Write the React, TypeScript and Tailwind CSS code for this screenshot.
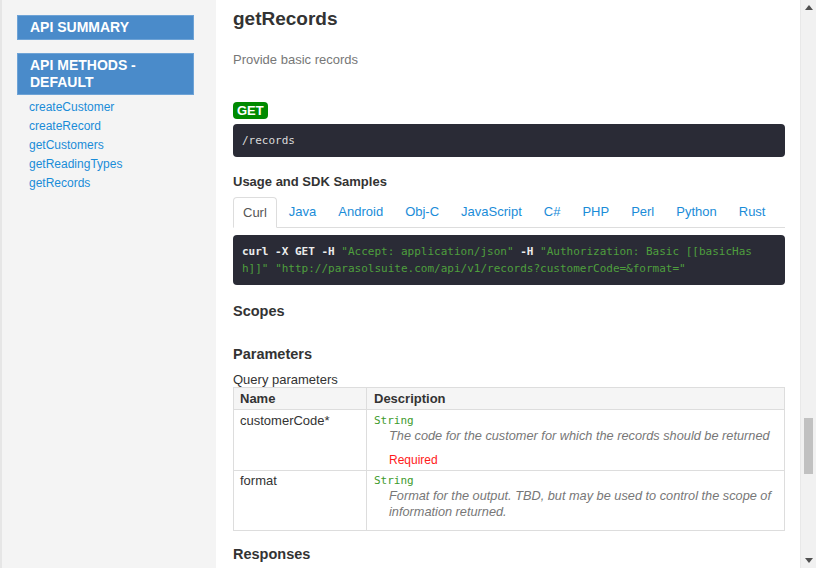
import React from 'react';

const methods = ['createCustomer', 'createRecord', 'getCustomers', 'getReadingTypes', 'getRecords'];
const tabs = ['Curl', 'Java', 'Android', 'Obj-C', 'JavaScript', 'C#', 'PHP', 'Perl', 'Python', 'Rust'];

const mono = { fontFamily: '"DejaVu Sans Mono", "Liberation Mono", monospace' };

function Sidebar() {
  return (
    <aside className="w-[216px] shrink-0 h-full bg-[#f4f4f4] border-l-2 border-[#e6e6e6] pl-[15px] pr-[22px] pt-[15px]">
      <div className="bg-[#4a8bca] border border-[#6ea3d6] text-white font-bold text-[14px] leading-[17px] px-[12px] py-[3px] uppercase">
        API Summary
      </div>
      <div className="mt-[13px] bg-[#4a8bca] border border-[#6ea3d6] text-white font-bold text-[14px] leading-[17px] px-[12px] py-[3px] uppercase">
        API Methods -<br />Default
      </div>
      <ul className="mt-[3px] pl-[12px]">
        {methods.map((m) => (
          <li key={m} className="text-[12px] leading-[19px] text-[#1a8cd8]">
            {m}
          </li>
        ))}
      </ul>
    </aside>
  );
}

function Scrollbar() {
  return (
    <div className="w-[16px] shrink-0 h-full bg-[#f1f1f1] border-l border-[#e8e8e8] flex flex-col items-center">
      <div className="h-[15px] flex items-center justify-center">
        <svg width="8" height="5" viewBox="0 0 8 5"><path d="M0 5 L4 0 L8 5 Z" fill="#505050" /></svg>
      </div>
      <div className="mt-[403px] w-[9px] h-[56px] bg-[#c1c1c1]" />
      <div className="flex-1" />
      <div className="h-[15px] flex items-center justify-center">
        <svg width="8" height="5" viewBox="0 0 8 5"><path d="M0 0 L8 0 L4 5 Z" fill="#505050" /></svg>
      </div>
    </div>
  );
}

function Main() {
  return (
    <main className="flex-1 h-full overflow-hidden bg-white pl-[17px] pr-[15px] text-[#333]">
      <h1 className="mt-[7px] text-[19px] leading-[23px] font-bold">getRecords</h1>
      <p className="mt-[22px] text-[13px] leading-[16px] text-[#777]">Provide basic records</p>

      <div className="mt-[34px] flex h-[17px]">
        <span className="bg-[#008a00] text-white font-bold text-[13px] leading-[17px] px-[4px] rounded-[4px]">
          GET
        </span>
      </div>
      <pre
        className="mt-[5px] bg-[#2a2b36] text-[#dcdcdc] text-[11px] leading-[17px] px-[9px] py-[8px] rounded-[4px]"
        style={mono}
      >
        /records
      </pre>

      <h3 className="mt-[17px] text-[13px] leading-[16px] font-bold">Usage and SDK Samples</h3>
      <div className="mt-[7px] flex border-b border-[#ddd] h-[31px]">
        {tabs.map((t, i) => (
          <div
            key={t}
            className={
              i === 0
                ? 'px-[9px] mr-[2px] text-[13px] leading-[30px] text-[#555] bg-white border border-[#ddd] border-b-white rounded-t-[4px] h-[31px]'
                : 'px-[10px] mr-[2px] text-[13px] leading-[30px] text-[#1a8cd8]'
            }
          >
            {t}
          </div>
        ))}
      </div>
      <pre
        className="mt-[7px] bg-[#2a2b36] text-[11px] leading-[17px] px-[9px] py-[8px] rounded-[4px] whitespace-pre"
        style={mono}
      >
        <span className="text-[#ececec] font-bold">curl -X GET -H </span>
        <span className="text-[#4e9f3d]">"Accept: application/json"</span>
        <span className="text-[#ececec] font-bold"> -H </span>
        <span className="text-[#4e9f3d]">"Authorization: Basic [[basicHas{'\n'}h]]"</span>
        <span className="text-[#ececec] font-bold"> </span>
        <span className="text-[#4e9f3d]">"http://parasolsuite.com/api/v1/records?customerCode=&amp;format="</span>
      </pre>

      <h2 className="mt-[17px] text-[14.5px] leading-[18px] font-bold">Scopes</h2>
      <h2 className="mt-[25px] text-[14.5px] leading-[18px] font-bold">Parameters</h2>
      <div className="mt-[9px] text-[13px] leading-[15px]">Query parameters</div>

      <table className="w-full border-collapse border border-[#ddd] text-[13px]">
        <thead>
          <tr className="bg-[#f5f5f5]">
            <th className="w-[133px] text-left font-bold border border-[#ddd] px-[6px] py-[3px] leading-[15px]">Name</th>
            <th className="text-left font-bold border border-[#ddd] px-[7px] py-[3px] leading-[15px]">Description</th>
          </tr>
        </thead>
        <tbody>
          <tr className="h-[60px] align-top">
            <td className="border border-[#ddd] px-[6px] pt-[3px] leading-[15px]">customerCode*</td>
            <td className="border border-[#ddd] px-[7px] pt-[4px] pb-[3px]">
              <div className="text-[11px] leading-[14px] text-[#3d9a2c]" style={mono}>String</div>
              <div className="pl-[15px] italic text-[12.75px] text-[#777] leading-[16px]">
                The code for the customer for which the records should be returned
              </div>
              <div className="pl-[15px] mt-[9px] text-[12px] leading-[14px] text-[#ff1a1a]">Required</div>
            </td>
          </tr>
          <tr className="h-[58px] align-top">
            <td className="border border-[#ddd] px-[6px] pt-[2px] leading-[15px]">format</td>
            <td className="border border-[#ddd] px-[7px] pt-[3px] pb-[10px]">
              <div className="text-[11px] leading-[14px] text-[#3d9a2c]" style={mono}>String</div>
              <div className="pl-[15px] italic text-[12.75px] text-[#777] leading-[16px]">
                Format for the output. TBD, but may be used to control the scope of information returned.
              </div>
            </td>
          </tr>
        </tbody>
      </table>

      <h2 className="mt-[14px] text-[14.5px] leading-[18px] font-bold">Responses</h2>
    </main>
  );
}

export default function App() {
  return (
    <div
      className="w-[816px] h-[568px] flex overflow-hidden"
      style={{ fontFamily: '"Liberation Sans", Arial, sans-serif' }}
    >
      <Sidebar />
      <Main />
      <Scrollbar />
    </div>
  );
}
